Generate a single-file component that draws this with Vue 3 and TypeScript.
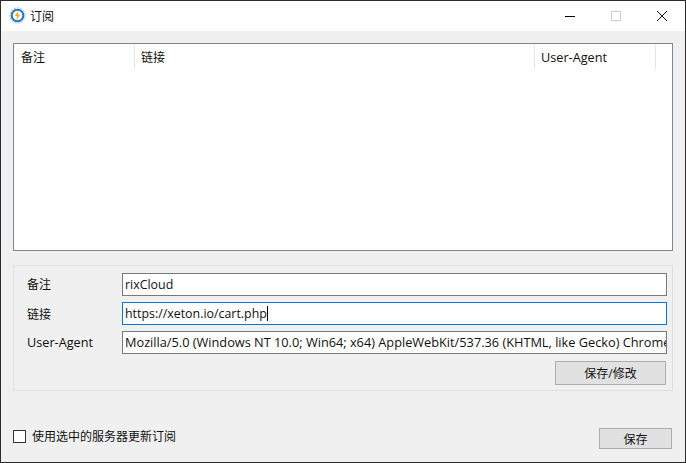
<script setup lang="ts">
interface Field { label: string; value: string; focused?: boolean; latin?: boolean }
const fields: Field[] = [
  { label: '备注', value: 'rixCloud' },
  { label: '链接', value: 'https://xeton.io/cart.php', focused: true },
  { label: 'User-Agent', latin: true, value: 'Mozilla/5.0 (Windows NT 10.0; Win64; x64) AppleWebKit/537.36 (KHTML, like Gecko) Chrome/74.0.3729.169 Safari/537.36' },
]
const columns = [
  { name: '备注', width: 121 },
  { name: '链接', width: 400 },
  { name: 'User-Agent', width: 121, latin: true },
]
</script>

<template>
  <div class="window">
    <header class="titlebar">
      <svg class="logo" width="17" height="17" viewBox="0 0 17 17">
        <circle cx="8.5" cy="8.5" r="7.6" fill="none" stroke="#8dbce6" stroke-width="1" stroke-dasharray="2 1.2" />
        <circle cx="8.5" cy="8.5" r="5.8" fill="#fff" stroke="#2a6fba" stroke-width="2" />
        <path d="M9.6 3.6 5.9 9h2.2l-.8 4.4 3.8-5.9H8.6z" fill="#f2a71b" />
      </svg>
      <span class="title">订阅</span>
      <div class="controls">
        <svg width="12" height="12" viewBox="0 0 12 12" class="ctl-min"><path d="M1 6.5h10" stroke="#000" stroke-width="1" /></svg>
        <svg width="12" height="12" viewBox="0 0 12 12" class="ctl-max"><rect x="1.5" y="1.5" width="9" height="9" fill="none" stroke="#ccc" /></svg>
        <svg width="12" height="12" viewBox="0 0 12 12" class="ctl-close"><path d="M1 1l10 10M11 1 1 11" stroke="#111" stroke-width="1" /></svg>
      </div>
    </header>

    <main class="body">
      <section class="table">
        <div class="thead">
          <div v-for="c in columns" :key="c.name" class="th" :class="{ latin: c.latin }" :style="{ width: c.width + 'px' }">{{ c.name }}</div>
        </div>
      </section>

      <section class="group">
        <div v-for="f in fields" :key="f.label" class="row">
          <label class="label" :class="{ latin: f.latin }">{{ f.label }}</label>
          <div class="input" :class="{ focused: f.focused, wide: f.latin }">
            <span class="value">{{ f.value }}</span><span v-if="f.focused" class="caret"></span>
          </div>
        </div>
        <div class="actions">
          <button class="btn btn-edit" type="button">保存/修改</button>
        </div>
      </section>

      <footer class="footer">
        <label class="check">
          <span class="box"></span>
          <span>使用选中的服务器更新订阅</span>
        </label>
        <button class="btn btn-save" type="button">保存</button>
      </footer>
    </main>
  </div>
</template>

<style>
html, body { margin: 0; padding: 0; background: #f0f0f0; }
</style>

<style scoped>
.window {
  box-sizing: border-box;
  width: 686px;
  height: 463px;
  border: 1px solid #2b2b2b;
  background: #f0f0f0;
  display: flex;
  flex-direction: column;
  font-family: "Open Sans", "Noto Sans CJK SC", sans-serif;
  font-size: 12px;
  color: #111;
  overflow: hidden;
}
.titlebar {
  height: 30px;
  flex: none;
  background: #fff;
  display: flex;
  align-items: center;
  padding-left: 8px;
}
.logo { flex: none; margin-bottom: 1px; }
.title { margin-left: 4px; font-size: 12px; margin-bottom: 1px; }
.controls {
  margin-left: auto;
  display: flex;
  align-items: center;
}
.ctl-min { margin-right: 34px; }
.ctl-max { margin-right: 34px; }
.ctl-close { margin-right: 17px; }
.body {
  flex: 1;
  display: flex;
  flex-direction: column;
  padding: 12px;
  min-height: 0;
}
.table {
  box-sizing: border-box;
  height: 208px;
  flex: none;
  border: 1px solid #828790;
  background: #fff;
}
.thead { display: flex; height: 25px; padding-top: 1px; }
.th {
  box-sizing: border-box;
  height: 24px;
  padding: 0 6px;
  line-height: 25px;
  border-right: 1px solid #e5e5e5;
  white-space: nowrap;
}
.th:first-child { padding-left: 7px; }
.th.latin { line-height: 24px; }
.latin { font-size: 12.7px; }
.group {
  box-sizing: border-box;
  margin-top: 14px;
  height: 126px;
  flex: none;
  border: 1px solid #dfdfdf;
  padding: 7px 5px 0 13px;
  display: flex;
  flex-direction: column;
  gap: 6px;
}
.row { display: flex; align-items: center; height: 23px; }
.label { width: 95px; flex: none; white-space: nowrap; }
.row:first-child .label { margin-top: -1px; }
.label.latin { margin-top: -1px; }
.input {
  box-sizing: border-box;
  flex: 1;
  min-width: 0;
  height: 23px;
  border: 1px solid #7a7a7a;
  background: #fff;
  line-height: 21px;
  padding: 0 2px;
  font-size: 12.4px;
  white-space: nowrap;
  overflow: hidden;
  display: flex;
}
.input.wide { font-size: 12.75px; }
.input.focused { border-color: #0078d7; }
.value { flex: none; }
.caret { flex: none; width: 1px; height: 15px; margin-top: 3px; background: #000; }
.actions { display: flex; justify-content: flex-end; margin-top: 1px; padding-right: 1px; }
.btn {
  box-sizing: border-box;
  border: 1px solid #adadad;
  background: #e1e1e1;
  font: inherit;
  color: #111;
  padding: 0;
}
.btn-edit { width: 111px; height: 24px; }
.footer {
  flex: 1;
  display: flex;
  align-items: flex-end;
  justify-content: space-between;
  padding-right: 1px;
}
.check { display: flex; align-items: center; gap: 6px; margin-bottom: 5px; }
.box {
  box-sizing: border-box;
  width: 13px;
  height: 13px;
  border: 1px solid #333;
  background: #fff;
}
.btn-save { width: 73px; height: 21px; margin-bottom: 1px; }
</style>
